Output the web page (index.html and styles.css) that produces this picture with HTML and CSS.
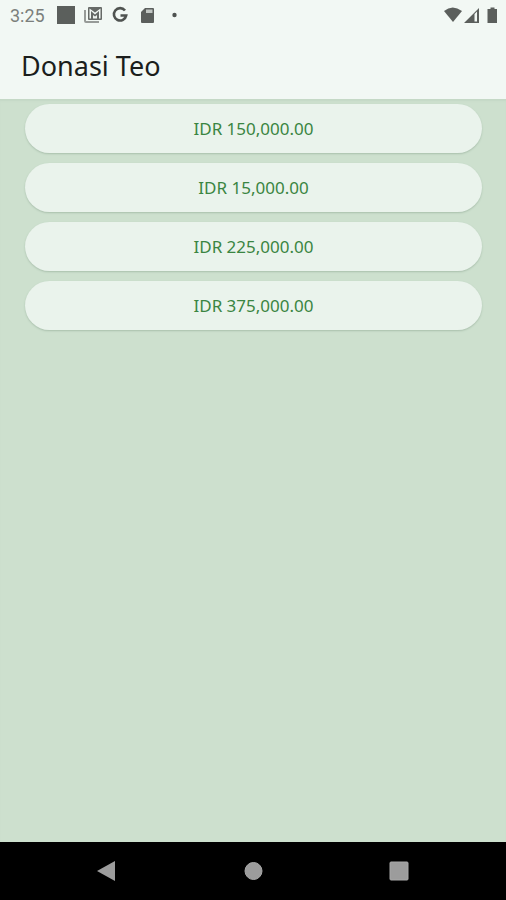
FILE: index.html
```html
<!DOCTYPE html>
<html lang="id">
<head>
<meta charset="utf-8">
<meta name="viewport" content="width=device-width, initial-scale=1">
<title>Donasi Teo</title>
<link rel="stylesheet" href="styles.css">
</head>
<body>
<div class="screen">
  <div class="status">
    <time class="clock">3:25</time>
    <div class="notices">
      <svg width="20" height="20" viewBox="0 0 20 20"><path fill="#5b5f5c" d="M1 0h18v18H1z"/></svg>
      <svg width="20" height="20" viewBox="0 0 20 20"><path fill="#979b98" d="M1 4h2v11h13v2H3q-2 0-2-2z"/><path fill="#666a67" fill-rule="evenodd" d="M6 1h12q1 0 1 1v11q0 1-1 1H6q-1 0-1-1V2q0-1 1-1zM6.500 2.500v10H8V5l4 3.500L16 5v7.500h1.500v-10L12 6.500z"/><path fill="#eef4f0" d="M10 9l2 1.500L14 9v3.500h-4z"/></svg>
      <svg width="20" height="20" viewBox="0 0 20 20"><path fill="none" stroke="#4f5350" stroke-width="2.600" d="M15 4.500A6.200 6.200 0 1 0 16.200 9.500H10.500"/></svg>
      <svg width="20" height="20" viewBox="0 0 20 20"><path fill="#5b5f5c" d="M8 2h8q1 0 1 1v13q0 1-1 1H5q-1 0-1-1V6z"/><path fill="#c2c7c3" d="M9 3.500h6.500V7H9z"/></svg>
      <svg width="20" height="20" viewBox="0 0 20 20"><circle cx="10.500" cy="9" r="2.200" fill="#4f5350"/></svg>
    </div>
    <svg class="signals" width="56" height="20" viewBox="0 0 56 20"><g fill="#5b5f5c"><path d="M2 5Q10.500 -2 20 5L11 16z"/><path fill-rule="evenodd" d="M37 2v15H22zM32.500 8v7.500H35V5.500z"/><path d="M48.500 1.500h4V3H55v14h-9.500V3h3z"/></g></svg>
  </div>
  <header class="bar"><h1>Donasi Teo</h1></header>
  <main class="options">
    <button class="option" type="button">IDR 150,000.00</button>
    <button class="option" type="button">IDR 15,000.00</button>
    <button class="option" type="button">IDR 225,000.00</button>
    <button class="option" type="button">IDR 375,000.00</button>
  </main>
  <nav class="nav">
    <button type="button" aria-label="Back"><svg width="20" height="22" viewBox="0 0 20 22"><path fill="#9c9c9c" d="M18 1v20L0 11z"/></svg></button>
    <button type="button" aria-label="Home"><svg width="20" height="20" viewBox="0 0 20 20"><circle cx="10.500" cy="10" r="8.500" fill="#9c9c9c" stroke="#a8a8a8"/></svg></button>
    <button type="button" aria-label="Recents"><svg width="20" height="20" viewBox="0 0 20 20"><rect x="1" y="1" width="18" height="18" rx="1" fill="#9c9c9c" stroke="#a8a8a8"/></svg></button>
  </nav>
</div>
</body>
</html>
```
FILE: styles.css
```css
* {
  box-sizing: border-box;
}

body {
  margin: 0;
  font-family: "Noto Sans", sans-serif;
}

.screen {
  display: flex;
  flex-direction: column;
  min-height: 100vh;
  background: #cde0ce;
}

.status {
  display: flex;
  align-items: center;
  height: 32px;
  padding: 0 8px 0 10px;
  background: #f2f8f4;
}

.clock {
  width: 46px;
  font: 18px/32px Roboto, sans-serif;
  color: #7b7f7c;
}

.notices {
  display: flex;
  gap: 7px;
}

.signals {
  margin-left: auto;
}

.status svg,
.nav svg {
  display: block;
}

.bar {
  padding: 16px 21px;
  background: #f2f8f4;
}

h1 {
  margin: 0;
  font-size: 27px;
  line-height: 35px;
  font-weight: 400;
  color: #1b1e1c;
}

.options {
  display: flex;
  flex: 1;
  flex-direction: column;
  gap: 10px;
  padding: 5px 24px 10px 25px;
  box-shadow: inset 0 3px 2px -1px #c4d8c6;
}

.option {
  height: 49px;
  padding: 0 16px;
  border: 0;
  border-radius: 25px;
  background: #eaf3ec;
  box-shadow: 0 1px 2px #a9bfac;
  font: 17px/24px "Noto Sans", sans-serif;
  color: #3a8542;
}

.nav {
  display: grid;
  grid-template-columns: repeat(3, 1fr);
  height: 58px;
  padding: 0 34px;
  background: #000;
}

.nav button {
  display: flex;
  align-items: center;
  justify-content: center;
  padding: 0;
  border: 0;
  background: none;
}
```
